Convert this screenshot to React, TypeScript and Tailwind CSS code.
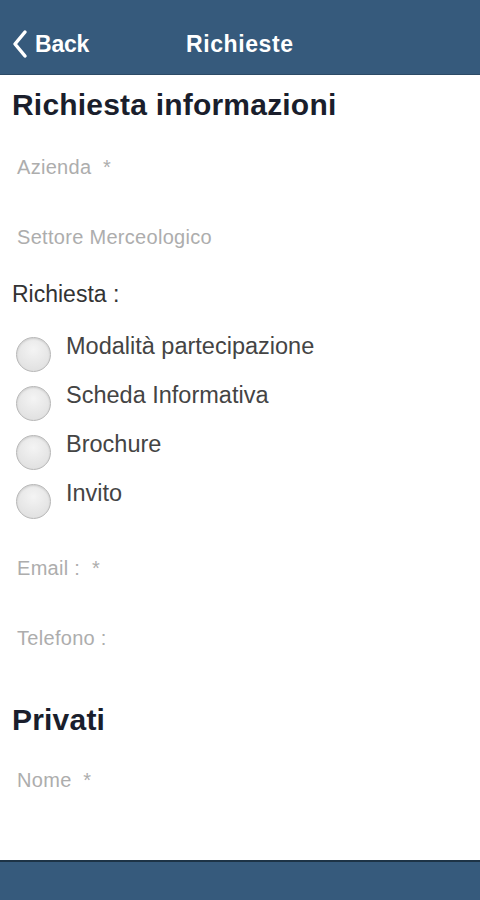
const options = ["Modalità partecipazione", "Scheda Informativa", "Brochure", "Invito"];

function Field({ label, className = "" }: { label: string; className?: string }) {
  return (
    <div className={`h-[70px] flex items-center pl-[17px] text-[20px] tracking-[0.3px] text-[#adadad] whitespace-pre ${className}`}>
      {label}
    </div>
  );
}

export default function App() {
  return (
    <div className="w-[480px] h-[900px] flex flex-col bg-white font-['Liberation_Sans',Arial,sans-serif]">
      <header className="h-[75px] shrink-0 bg-[#365a7c] border-b border-[#2c4a66] relative flex items-center pt-[14px]">
        <div className="flex items-center pl-[11px] gap-[6px] text-white">
          <svg width="18" height="30" viewBox="0 0 18 30" fill="none">
            <path d="M14 3 L4 15 L14 27" stroke="#fff" strokeWidth="3.5" strokeLinecap="round" strokeLinejoin="round" />
          </svg>
          <span className="text-[23px] font-semibold tracking-[-0.2px]">Back</span>
        </div>
        <h1 className="absolute left-[186px] top-[14px] bottom-0 flex items-center text-white text-[23px] font-bold tracking-[0.6px]">
          Richieste
        </h1>
      </header>

      <main className="flex-1 flex flex-col">
        <h2 className="mt-[12px] h-[36px] leading-[36px] pl-[12px] text-[30px] font-bold text-[#1a1e2c] tracking-[0.2px]">
          Richiesta informazioni
        </h2>
        <Field label="Azienda  *" className="mt-[9px]" />
        <Field label="Settore Merceologico" />
        <div className="h-[30px] mt-[7px] flex items-center pl-[12px] text-[23px] text-[#333]">Richiesta :</div>
        <div className="mt-[21px] flex flex-col">
          {options.map((o) => (
            <div key={o} className="h-[49px] flex items-start pl-[16px] gap-[15px]">
              <span className="mt-[7px] w-[35px] h-[35px] shrink-0 rounded-full border border-[#b8b8b8] bg-[radial-gradient(circle_at_50%_35%,#f4f4f4,#dcdcdc)] shadow-[inset_0_1px_2px_rgba(0,0,0,0.12)]" />
              <span className="mt-[2px] text-[23.5px] text-[#444] leading-[28px]">{o}</span>
            </div>
          ))}
        </div>
        <Field label="Email :  *" className="mt-[7px]" />
        <Field label="Telefono :" />
        <h2 className="mt-[29px] h-[36px] leading-[36px] pl-[12px] text-[30px] font-bold text-[#1a1e2c] tracking-[0.2px]">
          Privati
        </h2>
        <Field label="Nome  *" className="mt-[7px]" />
      </main>

      <footer className="h-[40px] shrink-0 bg-[#365a7c] border-t-2 border-[#1d3346]" />
    </div>
  );
}
